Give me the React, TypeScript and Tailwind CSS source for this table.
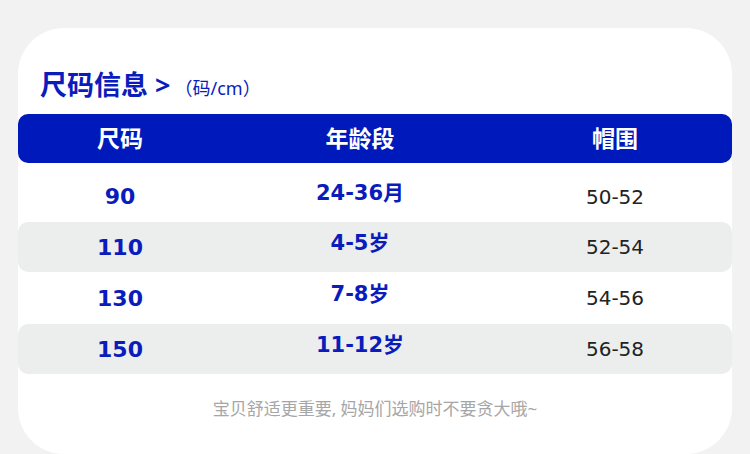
const rows = [
  { size: "90", age: "24-36月", head: "50-52" },
  { size: "110", age: "4-5岁", head: "52-54" },
  { size: "130", age: "7-8岁", head: "54-56" },
  { size: "150", age: "11-12岁", head: "56-58" },
];

const num = { fontFamily: '"DejaVu Sans", "Noto Sans CJK SC", sans-serif' };

const App = () => {
  return (
    <div
      className="w-[750px] h-[454px] overflow-hidden bg-[#f2f2f2] pt-[28px] px-[18px]"
      style={{ fontFamily: '"Noto Sans", "Noto Sans CJK SC", sans-serif' }}
    >
      <div className="bg-white rounded-[46px] h-[426px] flex flex-col">
        {/* title */}
        <div className="flex items-end pl-[22px] h-[86px] pb-[16px] text-[#0a1cbc]">
          <span className="text-[27px] font-bold leading-none">尺码信息 &gt;</span>
          <span className="text-[18px] leading-none ml-[4px] mb-[1px]">（码/cm）</span>
        </div>

        {/* header */}
        <div className="grid grid-cols-[204px_276px_234px] h-[49px] items-center rounded-[10px] bg-[#0019bb] text-white text-[23px] font-bold">
          <div className="text-center">尺码</div>
          <div className="text-center">年龄段</div>
          <div className="text-center">帽围</div>
        </div>

        {/* rows */}
        {rows.map((r, i) => (
          <div
            key={r.size}
            className={
              i === 0
                ? "grid grid-cols-[204px_276px_234px] h-[59px] pt-[8px] items-center"
                : i % 2 === 1
                ? "grid grid-cols-[204px_276px_234px] h-[50px] items-center rounded-[10px] bg-[#eceeee]"
                : "grid grid-cols-[204px_276px_234px] h-[52px] items-center"
            }
          >
            <div className="text-center text-[22px] font-bold text-[#0a1cbc]" style={num}>
              {r.size}
            </div>
            <div className="text-center text-[21px] font-bold text-[#0a1cbc] pb-[6px]" style={num}>
              {r.age}
            </div>
            <div className="text-center text-[20px] text-[#222]" style={num}>
              {r.head}
            </div>
          </div>
        ))}

        <div className="text-center text-[17px] text-[#a6a6a6] mt-[22px]">
          宝贝舒适更重要, 妈妈们选购时不要贪大哦~
        </div>
      </div>
    </div>
  );
};

export default App;
